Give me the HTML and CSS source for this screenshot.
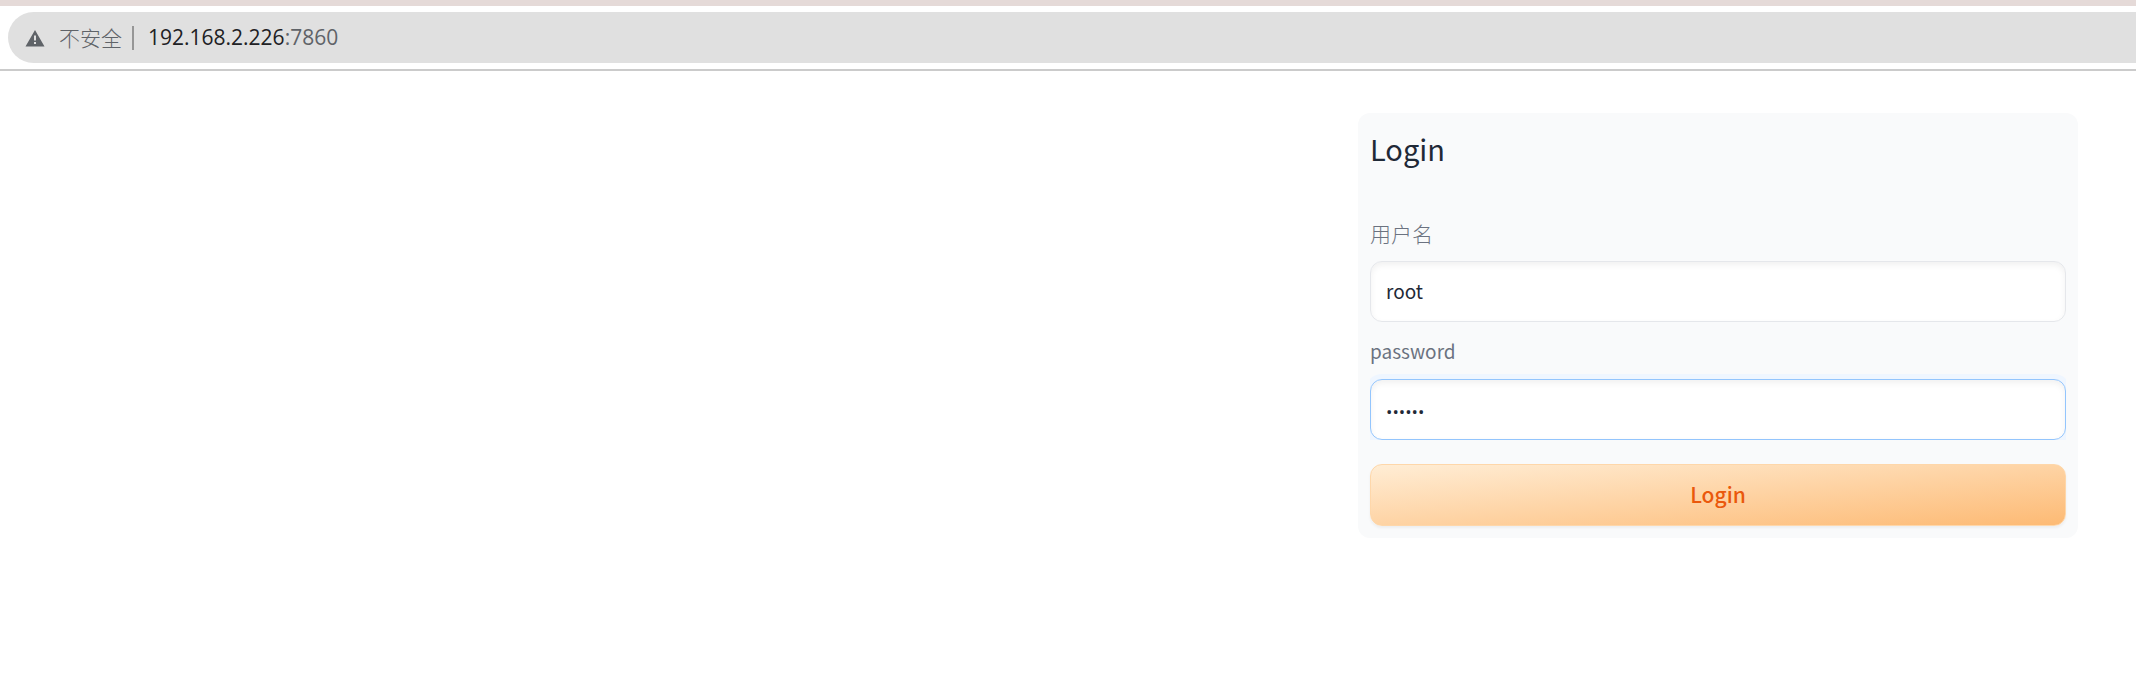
FILE: index.html
```html
<!DOCTYPE html>
<html lang="zh-CN">
<head>
<meta charset="utf-8">
<meta name="viewport" content="width=device-width, initial-scale=1">
<title>Login</title>
<link rel="stylesheet" href="styles.css">
</head>
<body>
<header class="browser-bar">
  <div class="address">
    <svg class="warning-icon" viewBox="0 0 20 18" aria-hidden="true">
      <path fill="#5f6368" fill-rule="evenodd" d="M10 1 19.500 17.500H.5ZM9 6.500v5h2v-5ZM9 13v2h2v-2Z"/>
    </svg>
    <span class="security">不安全</span>
    <span class="divider"></span>
    <span class="url">192.168.2.226<span class="port">:7860</span></span>
  </div>
</header>
<main class="page">
  <form class="card">
    <h1 class="title">Login</h1>
    <div class="field">
      <label class="label label-han" for="username">用户名</label>
      <input class="input" id="username" type="text" value="root">
    </div>
    <div class="field">
      <label class="label" for="password">password</label>
      <input class="input input-secret input-active" id="password" type="password" value="secret">
    </div>
    <button class="submit" type="button">Login</button>
  </form>
</main>
</body>
</html>
```
FILE: styles.css
```css
* {
  box-sizing: border-box;
}

body {
  margin: 0;
  background: #fff;
  color: #1f2937;
  font-family: "Noto Sans CJK SC", sans-serif;
}

.browser-bar {
  padding: 6px 0 6px 8px;
  border-top: 6px solid #e5dad8;
  border-bottom: 2px solid #cbcbcb;
}

.address {
  display: flex;
  align-items: center;
  height: 51px;
  padding-left: 17px;
  border-radius: 26px 0 0 26px;
  background: #e0e0e0;
  color: #5f6368;
  font-size: 21px;
  line-height: 30px;
}

.warning-icon {
  width: 20px;
  height: 18px;
  margin-right: 14px;
}

.security,
.url {
  padding-bottom: 2px;
}

.security {
  font-weight: 300;
}

.divider {
  width: 2px;
  height: 24px;
  margin: 0 14px 0 10px;
  background: #969696;
}

.url {
  color: #202124;
  font-family: "Open Sans", sans-serif;
}

.port {
  color: #5f6368;
}

.page {
  display: flex;
  justify-content: flex-end;
  padding: 42px 58px;
}

.card {
  display: flex;
  flex-direction: column;
  width: 720px;
  max-width: 100%;
  padding: 12px;
  border-radius: 12px;
  background: #f9fafb;
}

.title {
  margin: 0 0 48px;
  font-size: 29px;
  font-weight: 400;
  line-height: 46px;
}

.field {
  display: flex;
  flex-direction: column;
  gap: 14px;
  overflow: hidden;
}

.field + .field {
  margin-top: 15px;
}

.label {
  color: #6b7280;
  font-size: 19px;
  line-height: 28px;
}

.label-han {
  font-size: 21px;
  font-weight: 300;
}

.input {
  width: 100%;
  height: 61px;
  padding: 0 15px 2px;
  border: 1px solid #e5e7eb;
  border-radius: 12px;
  outline: none;
  background: #fff;
  box-shadow: inset 0 3px 6px rgba(0, 0, 0, 0.06);
  color: #1f2937;
  font-family: inherit;
  font-size: 19px;
}

.input-secret {
  padding: 3px 15px 0;
  font-family: "Open Sans", sans-serif;
  font-size: 17px;
}

.input-active {
  border-color: #93c5fd;
  box-shadow: 0 0 0 5px #eff6ff, inset 0 3px 6px rgba(0, 0, 0, 0.06);
}

.submit {
  height: 62px;
  margin-top: 24px;
  padding: 0 0 2px;
  border: 1px solid #fed7aa;
  border-radius: 12px;
  background: linear-gradient(to bottom right, #ffedd5, #fdba74);
  box-shadow: 0 2px 3px rgba(0, 0, 0, 0.05);
  color: #ea580c;
  font-family: inherit;
  font-size: 21px;
  font-weight: 500;
}
```
